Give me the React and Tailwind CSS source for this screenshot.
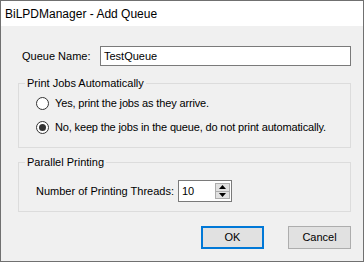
function Radio({ checked, label }) {
  return (
    <label className="flex items-center h-[20px]">
      <span className="w-[13px] h-[13px] rounded-full border border-[#333333] bg-white flex items-center justify-center shrink-0">
        {checked && <span className="w-[7px] h-[7px] rounded-full bg-[#333333]" />}
      </span>
      <span className="ml-[6px] whitespace-nowrap tracking-[-0.15px]">{label}</span>
    </label>
  );
}

function Spinner() {
  return (
    <div className="flex flex-col w-[15px] h-[16px] border border-[#adadad] bg-[#e1e1e1] mr-[1px]">
      <div className="flex-1 flex items-center justify-center border-b border-[#adadad]">
        <svg width="7" height="4" viewBox="0 0 7 4"><path d="M3.5 0 L7 4 L0 4 Z" fill="#000" /></svg>
      </div>
      <div className="flex-1 flex items-center justify-center">
        <svg width="7" height="4" viewBox="0 0 7 4"><path d="M0 0 L7 0 L3.5 4 Z" fill="#000" /></svg>
      </div>
    </div>
  );
}

export default function App() {
  return (
    <div
      className="w-[364px] h-[262px] border border-[#707070] bg-[#f0f0f0] flex flex-col text-[11px] text-black"
      style={{ fontFamily: '"Liberation Sans", Arial, sans-serif' }}
    >
      <div className="h-[25px] bg-white flex items-center pl-[4px] text-[12px] shrink-0">
        BiLPDManager - Add Queue
      </div>

      <div className="flex flex-col pl-[17px] pr-[12px]">
        <div className="flex items-center mt-[20px] h-[20px]">
          <span className="ml-[4px]">Queue Name:</span>
          <div className="ml-auto w-[251px] h-[20px] border border-[#7a7a7a] bg-white flex items-center pl-[3px]">
            TestQueue
          </div>
        </div>

        <fieldset className="mt-[10px] border border-[#dcdcdc] px-[17px] pt-[3px] pb-[10px]">
          <legend className="px-[2px] leading-[14px] -ml-[11px]">Print Jobs Automatically</legend>
          <div className="flex flex-col gap-[4px]">
            <Radio label="Yes, print the jobs as they arrive." />
            <Radio checked label="No, keep the jobs in the queue, do not print automatically." />
          </div>
        </fieldset>

        <fieldset className="mt-[7px] border border-[#dcdcdc] px-[17px] pt-[11px] pb-[9px]">
          <legend className="px-[2px] leading-[14px] -ml-[11px]">Parallel Printing</legend>
          <div className="flex items-center">
            <span className="w-[142px]">Number of Printing Threads:</span>
            <div className="w-[54px] h-[22px] border border-[#7a7a7a] bg-white flex items-center justify-between pl-[3px]">
              <span>10</span>
              <Spinner />
            </div>
          </div>
        </fieldset>

        <div className="flex justify-end gap-[24px] mt-[14px]">
          <button className="w-[63px] h-[23px] border-2 border-[#0078d7] bg-[#e1e1e1]">OK</button>
          <button className="w-[63px] h-[23px] border border-[#adadad] bg-[#e1e1e1]">Cancel</button>
        </div>
      </div>
    </div>
  );
}
